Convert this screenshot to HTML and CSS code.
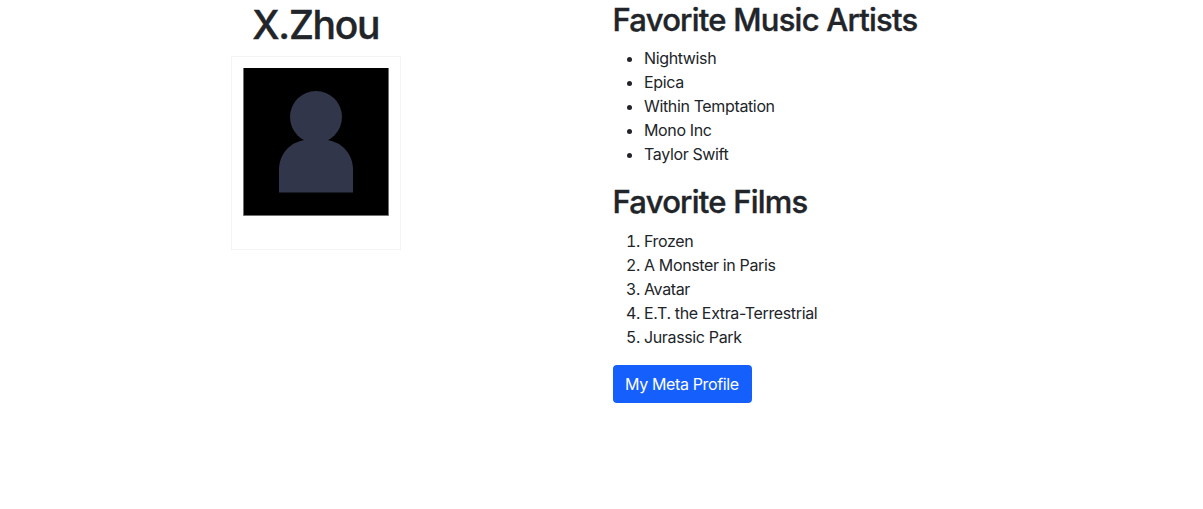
FILE: index.html
```html
<!DOCTYPE html>
<html lang="en">
<head>
<meta charset="utf-8">
<title>X.Zhou</title>
<link rel="stylesheet" href="styles.css">
</head>
<body>
<main class="row">
  <section class="profile">
    <h1>X.Zhou</h1>
    <svg class="avatar" viewBox="0 0 170 194" role="img" aria-label="Avatar">
      <rect x=".5" y=".5" width="169" height="193" fill="#fff" stroke="#f4f4f4"/>
      <rect x="12.4" y="12" width="145.2" height="147.6" fill="#000"/>
      <path d="M12.5 12V159.5H157.5V12" fill="none" stroke="#777" stroke-width=".6"/>
      <circle cx="85" cy="61" r="26" fill="#32364a"/>
      <path d="M48 136.5V114C48 98 59 86 74 84H96C111 86 122 98 122 114V136.5Z" fill="#32364a"/>
    </svg>
  </section>
  <section class="favorites">
    <h2>Favorite Music Artists</h2>
    <ul>
      <li>Nightwish</li>
      <li>Epica</li>
      <li>Within Temptation</li>
      <li>Mono Inc</li>
      <li>Taylor Swift</li>
    </ul>
    <h2>Favorite Films</h2>
    <ol>
      <li>Frozen</li>
      <li>A Monster in Paris</li>
      <li>Avatar</li>
      <li>E.T. the Extra-Terrestrial</li>
      <li>Jurassic Park</li>
    </ol>
    <a class="btn" href="#">My Meta Profile</a>
  </section>
</main>
</body>
</html>
```
FILE: styles.css
```css
* { box-sizing: border-box; }
body {
  margin: 0;
  font: 16px/24px Inter, "Liberation Sans", sans-serif;
  letter-spacing: -0.36px;
  color: #212529;
  background: #fff;
}
.row { display: flex; padding: 0 19px; }
.profile { width: 593.5px; text-align: center; }
.favorites { flex: 1; }
h1, h2 { font-weight: 500; -webkit-text-stroke: 0.4px #212529; }
h1 {
  margin: 0 0 7px;
  padding-top: 1px;
  font-size: 39px;
  line-height: 48px;
  letter-spacing: -1.3px;
}
h2 {
  margin: 0 0 7.4px;
  padding-top: 1px;
  font-size: 31px;
  line-height: 38px;
  letter-spacing: -0.76px;
}
.avatar { display: block; width: 170px; height: 194px; margin: 0 auto; }
ul, ol { margin: 0 0 16px; padding-left: 31.5px; }
.btn {
  display: inline-block;
  padding: 7px 13px 7px 12.5px;
  border-radius: 4px;
  background: #1560fd;
  color: #fff;
  text-decoration: none;
}
```
